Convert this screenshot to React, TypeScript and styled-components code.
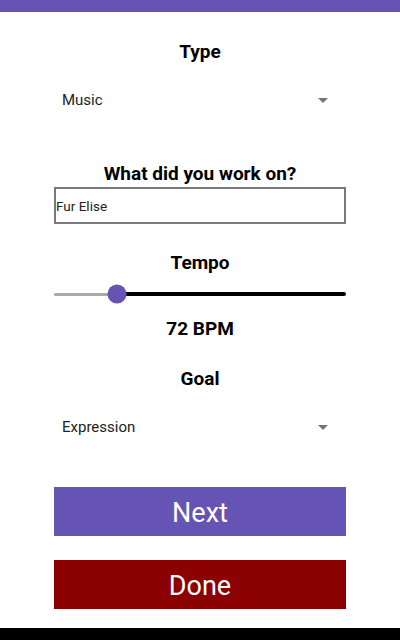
import React from "react";
import styled, { createGlobalStyle } from "styled-components";

const Global = createGlobalStyle`
  html, body { margin: 0; padding: 0; background: #fff; }
  body { font-family: Roboto, "Noto Sans", sans-serif; }
  #root { height: 640px; }
`;

const Screen = styled.div`
  width: 400px;
  height: 640px;
  display: flex;
  flex-direction: column;
  background: #fff;
  overflow: hidden;
`;

const StatusBar = styled.div`
  height: 12px;
  flex: none;
  background: #6654b4;
`;

const NavBar = styled.div`
  height: 12px;
  flex: none;
  background: #000;
`;

const Content = styled.div`
  flex: 1;
  display: flex;
  flex-direction: column;
  padding: 0 54px;
`;

const Label = styled.div<{ $top: number }>`
  margin-top: ${(p) => p.$top}px;
  height: 24px;
  line-height: 24px;
  text-align: center;
  font-weight: 700;
  font-size: 19px;
  color: #000;
`;

const Select = styled.div<{ $top: number }>`
  margin-top: ${(p) => p.$top}px;
  height: 24px;
  display: flex;
  align-items: center;
  justify-content: space-between;
  padding: 0 18px 0 8px;
  font-size: 15px;
  color: #222;
`;

const Caret = styled.span`
  width: 0;
  height: 0;
  border-left: 5px solid transparent;
  border-right: 5px solid transparent;
  border-top: 5px solid #757575;
`;

const Input = styled.div`
  margin-top: 1px;
  height: 37px;
  box-sizing: border-box;
  border: 2px solid #7a7a7a;
  display: flex;
  align-items: center;
  padding-left: 0;
  font-size: 13.5px;
  color: #222;
`;

const Slider = styled.div`
  margin-top: 9px;
  height: 20px;
  position: relative;
  display: flex;
  align-items: center;
`;

const Track = styled.div<{ $active?: boolean }>`
  height: ${(p) => (p.$active ? 4 : 3)}px;
  background: ${(p) => (p.$active ? "#000" : "#aaa")};
  border-radius: 2px;
`;

const Thumb = styled.div`
  position: absolute;
  top: 50%;
  width: 19px;
  height: 19px;
  border-radius: 50%;
  background: #6654b4;
  transform: translate(-50%, -50%);
`;

const Button = styled.div<{ $bg: string; $top: number }>`
  margin-top: ${(p) => p.$top}px;
  height: 49px;
  box-sizing: border-box;
  padding-top: 3px;
  background: ${(p) => p.$bg};
  color: #fff;
  font-size: 27px;
  display: flex;
  align-items: center;
  justify-content: center;
`;

export default function App() {
  const pct = 63 / 292;
  return (
    <>
      <Global />
      <Screen>
        <StatusBar />
        <Content>
          <Label $top={28}>Type</Label>
          <Select $top={24}>
            Music
            <Caret />
          </Select>
          <Label $top={50}>What did you work on?</Label>
          <Input>Fur Elise</Input>
          <Label $top={27}>Tempo</Label>
          <Slider>
            <Track style={{ width: `${pct * 100}%` }} />
            <Track $active style={{ flex: 1 }} />
            <Thumb style={{ left: `${pct * 100}%` }} />
          </Slider>
          <Label $top={13}>72 BPM</Label>
          <Label $top={26}>Goal</Label>
          <Select $top={24}>
            Expression
            <Caret />
          </Select>
          <Button $bg="#6654b4" $top={48}>Next</Button>
          <Button $bg="#8b0000" $top={24}>Done</Button>
        </Content>
        <NavBar />
      </Screen>
    </>
  );
}
